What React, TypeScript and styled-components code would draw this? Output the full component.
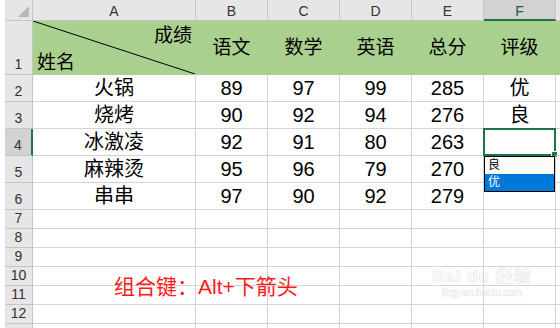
import React from 'react';
import styled, { createGlobalStyle, css } from 'styled-components';

const GlobalStyle = createGlobalStyle`
  html, body {
    margin: 0;
    padding: 0;
    background: #ffffff;
    overflow: hidden;
  }
  body {
    font-family: "Liberation Sans", "Noto Sans CJK SC", sans-serif;
  }
`;

const GREEN = '#a9d08e';
const GRID = '#d4d4d4';

const Page = styled.div`
  position: relative;
  width: 560px;
  height: 328px;
  padding-left: 5px;
  box-sizing: border-box;
  overflow: hidden;
`;

const Sheet = styled.div`
  display: grid;
  grid-template-columns: 28px 163px repeat(6, 72px);
  grid-template-rows: 21px 54px repeat(5, 27px) repeat(7, 19px);
`;

const Corner = styled.div`
  position: relative;
  background: #e6e6e6;
  border-right: 1px solid #c4c4c4;
  border-bottom: 1px solid #c4c4c4;
  box-sizing: border-box;

  &::after {
    content: '';
    position: absolute;
    right: 3px;
    bottom: 3px;
    border-left: 11px solid transparent;
    border-bottom: 11px solid #b9b9b9;
  }
`;

const ColHead = styled.div<{ $active?: boolean }>`
  display: flex;
  align-items: center;
  justify-content: center;
  background: #e6e6e6;
  border-right: 1px solid #c4c4c4;
  border-bottom: 1px solid #c4c4c4;
  box-sizing: border-box;
  font-size: 14px;
  color: #333;
  padding-top: 2px;

  ${(p) =>
    p.$active &&
    css`
      background: #d2d2d2;
      border-bottom: 2px solid #217346;
      color: #1e5c38;
    `}
`;

const RowHead = styled.div<{ $active?: boolean }>`
  display: flex;
  align-items: flex-end;
  justify-content: center;
  padding-bottom: 1px;
  background: #e6e6e6;
  border-right: 1px solid #c4c4c4;
  border-bottom: 1px solid #c4c4c4;
  box-sizing: border-box;
  font-size: 14px;
  line-height: 17px;
  color: #333;

  ${(p) =>
    p.$active &&
    css`
      background: #d2d2d2;
      border-right: 2px solid #217346;
    `}
`;

const Cell = styled.div<{ $head?: boolean }>`
  position: relative;
  display: flex;
  align-items: flex-end;
  justify-content: center;
  padding-bottom: 1px;
  box-sizing: border-box;
  border-right: 1px solid ${GRID};
  border-bottom: 1px solid ${GRID};
  font-size: 20px;
  line-height: 24px;
  color: #000;
  white-space: nowrap;

  ${(p) =>
    p.$head &&
    css`
      align-items: center;
      padding-bottom: 0;
      background: ${GREEN};
      border-color: ${GREEN};
      font-size: 19px;
    `}
`;

const SplitCell = styled(Cell)`
  display: flex;
  flex-direction: column;
  align-items: stretch;
  justify-content: space-between;
  padding: 4px 3px 0 4px;
`;

const SplitTop = styled.span`
  align-self: flex-end;
  line-height: 22px;
`;

const SplitBottom = styled.span`
  align-self: flex-start;
  line-height: 22px;
`;

const Diagonal = styled.svg`
  position: absolute;
  inset: 0;
  width: 100%;
  height: 100%;
`;

const Selection = styled.div`
  position: absolute;
  inset: -1px -1px -1px -1px;
  border: 2px solid #217346;
  pointer-events: none;

  &::after {
    content: '';
    position: absolute;
    right: -4px;
    bottom: -4px;
    width: 5px;
    height: 5px;
    background: #217346;
    border: 1px solid #fff;
  }
`;

const Dropdown = styled.div`
  position: absolute;
  top: calc(100% + 1px);
  left: 0;
  width: 71px;
  border: 1px solid #000;
  background: #fbfbf7;
  z-index: 2;
  box-sizing: border-box;
`;

const Option = styled.div<{ $selected?: boolean }>`
  height: 17px;
  line-height: 17px;
  padding-left: 3px;
  font-size: 12px;
  text-align: left;
  color: #000;

  ${(p) =>
    p.$selected &&
    css`
      background: #0078d7;
      color: #fff;
    `}
`;

const Note = styled.div`
  position: absolute;
  left: 114px;
  top: 274px;
  font-size: 21px;
  line-height: 25px;
  color: #ff1a1a;
  white-space: nowrap;
`;

const Watermark = styled.div`
  position: absolute;
  left: 432px;
  top: 268px;
  display: flex;
  flex-direction: column;
  align-items: center;
  color: transparent;
  -webkit-text-stroke: 0.7px #e8e8e8;
  pointer-events: none;
`;

const MarkLogo = styled.div`
  font-size: 17px;
  font-weight: bold;
  line-height: 18px;
  letter-spacing: 1px;
`;

const MarkUrl = styled.div`
  font-size: 10px;
  line-height: 14px;
  -webkit-text-stroke: 0.5px #e8e8e8;
`;

const columns = ['A', 'B', 'C', 'D', 'E', 'F', ''];

const rows: (string | number)[][] = [
  ['火锅', 89, 97, 99, 285, '优'],
  ['烧烤', 90, 92, 94, 276, '良'],
  ['冰激凌', 92, 91, 80, 263, ''],
  ['麻辣烫', 95, 96, 79, 270, ''],
  ['串串', 97, 90, 92, 279, ''],
];

const subjects = ['语文', '数学', '英语', '总分', '评级'];

const App = () => (
  <Page>
    <GlobalStyle />
    <Sheet>
      <Corner />
      {columns.map((c, i) => (
        <ColHead key={i} $active={c === 'F'}>
          {c}
        </ColHead>
      ))}

      <RowHead>1</RowHead>
      <SplitCell $head>
        <Diagonal viewBox="0 0 100 100" preserveAspectRatio="none">
          <line x1="0" y1="0" x2="100" y2="100" stroke="#000" strokeWidth="1" vectorEffect="non-scaling-stroke" />
        </Diagonal>
        <SplitTop>成绩</SplitTop>
        <SplitBottom>姓名</SplitBottom>
      </SplitCell>
      {subjects.map((s) => (
        <Cell key={s} $head>
          {s}
        </Cell>
      ))}
      <Cell $head />

      {rows.map((r, i) => (
        <React.Fragment key={i}>
          <RowHead $active={i === 2}>{i + 2}</RowHead>
          {r.map((v, j) => (
            <Cell key={j}>
              {v}
              {i === 2 && j === 5 && (
                <>
                  <Selection />
                  <Dropdown>
                    <Option>良</Option>
                    <Option $selected>优</Option>
                  </Dropdown>
                </>
              )}
            </Cell>
          ))}
          <Cell />
        </React.Fragment>
      ))}

      {[7, 8, 9, 10, 11, 12, 0].map((n) => (
        <React.Fragment key={n}>
          <RowHead>{n || ''}</RowHead>
          {columns.map((c, i) => (
            <Cell key={i} />
          ))}
        </React.Fragment>
      ))}
    </Sheet>

    <Note>组合键：Alt+下箭头</Note>

    <Watermark>
      <MarkLogo>Bai du 经验</MarkLogo>
      <MarkUrl>jingyan.baidu.com</MarkUrl>
    </Watermark>
  </Page>
);

export default App;
